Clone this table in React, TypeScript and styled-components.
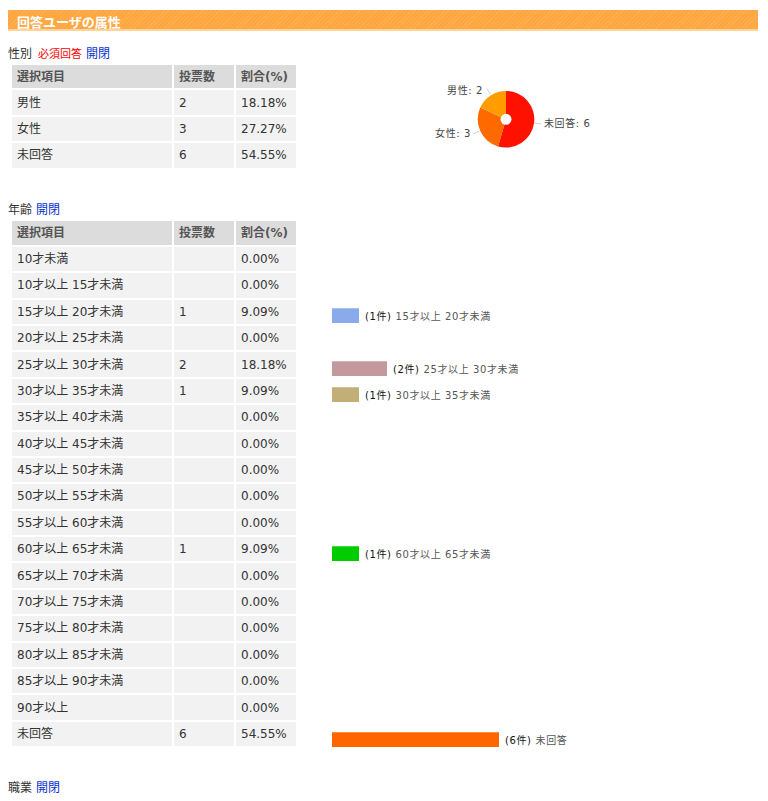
import React from "react";
import styled, { createGlobalStyle } from "styled-components";

const Global = createGlobalStyle`
  html, body { margin: 0; padding: 0; background: #fff; }
  body { font-family: "DejaVu Sans", "Noto Sans CJK JP", sans-serif; font-size: 12px; color: #333; }
`;

const Page = styled.div`
  padding: 10px 8px;
`;

const TitleBar = styled.div`
  width: 741px;
  height: 16px;
  padding: 3px 0 0 9px;
  line-height: 17px;
  font-size: 13px;
  font-weight: bold;
  color: #fff;
  font-family: "Noto Sans CJK JP", sans-serif;
  background-color: #ffa63f;
  background-image: repeating-linear-gradient(
    -45deg,
    rgba(255, 255, 255, 0.1) 0px,
    rgba(255, 255, 255, 0.1) 1px,
    transparent 1px,
    transparent 3px
  );
  border-bottom: 2px solid #ffd49a;
`;

const SectionLabel = styled.div<{ $gap: number }>`
  margin-top: ${(p) => p.$gap}px;
  height: 18px;
  line-height: 18px;
  font-size: 12px;
  color: #333;
  font-family: "Noto Sans CJK JP", sans-serif;
  display: flex;
  align-items: baseline;
  gap: 4px;
`;

const Required = styled.span`
  color: #ff0000;
  font-size: 11px;
  margin-left: 2px;
`;

const Toggle = styled.span`
  color: #0a30d0;
  cursor: pointer;
`;

const SectionBody = styled.div`
  margin-top: 1.5px;
  display: flex;
  align-items: flex-start;
`;

const Table = styled.table`
  margin-left: 2px;
  border-spacing: 2px;
  border-collapse: separate;
  table-layout: fixed;
  width: 288px;
`;

const Th = styled.th<{ $w: number }>`
  width: ${(p) => p.$w}px;
  height: 23.4px;
  padding: 0 5px;
  background: #dcdcdc;
  color: #555;
  font-weight: bold;
  text-align: left;
  line-height: 16px;
  white-space: nowrap;
`;

const Td = styled.td`
  height: 24.4px;
  padding: 0 5px;
  background: #f2f2f2;
  color: #333;
  line-height: 16px;
  white-space: nowrap;
  vertical-align: middle;
`;

const ChartArea = styled.div`
  margin-left: 34px;
`;

const PieSvg = styled.svg`
  display: block;
`;

const BarList = styled.div`
  margin-left: 34px;
  padding-top: 35.3px;
  display: flex;
  flex-direction: column;
`;

const BarRow = styled.div`
  height: 26.5px;
  display: flex;
  align-items: flex-start;
  &:last-child {
    height: 15px;
  }
`;

const BarLine = styled.div`
  height: 15px;
  display: flex;
  align-items: center;
  gap: 6px;
`;

const Bar = styled.div<{ $color: string }>`
  height: 15px;
  background: ${(p) => p.$color};
  box-shadow: inset 0 1px 0 rgba(255, 255, 255, 0.25);
`;

const BarText = styled.span`
  font-size: 10px;
  letter-spacing: 0.6px;
  color: #555;
  white-space: nowrap;
  font-family: "DejaVu Sans", "Noto Sans CJK JP", sans-serif;
`;

const Count = styled.span`
  color: #111;
  margin-right: 4px;
`;

type Row = { label: string; count?: number; pct: string };

const genderRows: Row[] = [
  { label: "男性", count: 2, pct: "18.18%" },
  { label: "女性", count: 3, pct: "27.27%" },
  { label: "未回答", count: 6, pct: "54.55%" },
];

const ageRows: (Row & { color?: string; w?: number })[] = [
  { label: "10才未満", pct: "0.00%" },
  { label: "10才以上 15才未満", pct: "0.00%" },
  { label: "15才以上 20才未満", count: 1, pct: "9.09%", color: "#8aabeb", w: 27 },
  { label: "20才以上 25才未満", pct: "0.00%" },
  { label: "25才以上 30才未満", count: 2, pct: "18.18%", color: "#c4999d", w: 55 },
  { label: "30才以上 35才未満", count: 1, pct: "9.09%", color: "#c2af78", w: 27 },
  { label: "35才以上 40才未満", pct: "0.00%" },
  { label: "40才以上 45才未満", pct: "0.00%" },
  { label: "45才以上 50才未満", pct: "0.00%" },
  { label: "50才以上 55才未満", pct: "0.00%" },
  { label: "55才以上 60才未満", pct: "0.00%" },
  { label: "60才以上 65才未満", count: 1, pct: "9.09%", color: "#00cc00", w: 27 },
  { label: "65才以上 70才未満", pct: "0.00%" },
  { label: "70才以上 75才未満", pct: "0.00%" },
  { label: "75才以上 80才未満", pct: "0.00%" },
  { label: "80才以上 85才未満", pct: "0.00%" },
  { label: "85才以上 90才未満", pct: "0.00%" },
  { label: "90才以上", pct: "0.00%" },
  { label: "未回答", count: 6, pct: "54.55%", color: "#ff6600", w: 167 },
];

function DataTable({ rows }: { rows: Row[] }) {
  return (
    <Table>
      <thead>
        <tr>
          <Th $w={150}>選択項目</Th>
          <Th $w={50}>投票数</Th>
          <Th $w={50}>割合(%)</Th>
        </tr>
      </thead>
      <tbody>
        {rows.map((r) => (
          <tr key={r.label}>
            <Td>{r.label}</Td>
            <Td>{r.count ?? ""}</Td>
            <Td>{r.pct}</Td>
          </tr>
        ))}
      </tbody>
    </Table>
  );
}

function slicePath(cx: number, cy: number, r: number, a0: number, a1: number) {
  const rad = (d: number) => (d * Math.PI) / 180;
  const x0 = cx + r * Math.sin(rad(a0));
  const y0 = cy - r * Math.cos(rad(a0));
  const x1 = cx + r * Math.sin(rad(a1));
  const y1 = cy - r * Math.cos(rad(a1));
  const large = a1 - a0 > 180 ? 1 : 0;
  return `M${cx},${cy} L${x0},${y0} A${r},${r} 0 ${large} 1 ${x1},${y1} Z`;
}

function GenderPie() {
  const cx = 174;
  const cy = 56.3;
  const r = 28.3;
  const total = 11;
  const aRed = (6 / total) * 360;
  const aOrange = aRed + (3 / total) * 360;
  const labelStyle = { fontSize: 10, fill: "#444", letterSpacing: 0.6 } as const;
  return (
    <PieSvg width={300} height={107} viewBox="0 0 300 107">
      <path d={slicePath(cx, cy, r, 0, aRed)} fill="#ff1100" />
      <path d={slicePath(cx, cy, r, aRed, aOrange)} fill="#ff6a00" />
      <path d={slicePath(cx, cy, r, aOrange, 360)} fill="#ff9c00" />
      <circle cx={cx} cy={cy} r={5.5} fill="#fff" />
      <polyline points="158.5,31.5 155,25.5" stroke="#d0d0d0" strokeWidth={1} fill="none" />
      <polyline points="147.5,68 141,71" stroke="#d0d0d0" strokeWidth={1} fill="none" />
      <polyline points="202.5,60 209,61" stroke="#d0d0d0" strokeWidth={1} fill="none" />
      <text x={151} y={27.5} textAnchor="end" dominantBaseline="central" style={labelStyle}>
        男性: 2
      </text>
      <text x={139} y={70} textAnchor="end" dominantBaseline="central" style={labelStyle}>
        女性: 3
      </text>
      <text x={212} y={60.5} textAnchor="start" dominantBaseline="central" style={labelStyle}>
        未回答: 6
      </text>
    </PieSvg>
  );
}

export default function App() {
  return (
    <Page>
      <Global />
      <TitleBar>回答ユーザの属性</TitleBar>

      <SectionLabel $gap={12.5}>
        <span>性別</span>
        <Required>必須回答</Required>
        <Toggle>開閉</Toggle>
      </SectionLabel>
      <SectionBody>
        <DataTable rows={genderRows} />
        <ChartArea>
          <GenderPie />
        </ChartArea>
      </SectionBody>

      <SectionLabel $gap={29.9}>
        <span>年齢</span>
        <Toggle>開閉</Toggle>
      </SectionLabel>
      <SectionBody>
        <DataTable rows={ageRows} />
        <BarList>
          {ageRows.map((r) => (
            <BarRow key={r.label}>
              {r.color && r.w ? (
                <BarLine>
                  <Bar $color={r.color} style={{ width: r.w }} />
                  <BarText>
                    <Count>({r.count}件)</Count>
                    {r.label}
                  </BarText>
                </BarLine>
              ) : null}
            </BarRow>
          ))}
        </BarList>
      </SectionBody>

      <SectionLabel $gap={30}>
        <span>職業</span>
        <Toggle>開閉</Toggle>
      </SectionLabel>
    </Page>
  );
}
